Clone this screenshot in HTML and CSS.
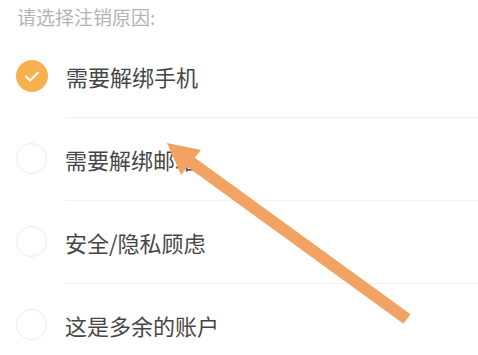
FILE: index.html
```html
<!DOCTYPE html>
<html lang="zh-CN">
<head>
    <meta charset="UTF-8">
    <meta name="viewport" content="width=device-width, initial-scale=1.0">
    <title>注销原因</title>
    <link rel="stylesheet" href="styles.css">
</head>
<body>
    <div class="page">
        <div class="title">请选择注销原因:</div>
        <div class="reason-list">
            <div class="reason">
                <span class="radio checked">
                    <svg viewBox="0 0 32 32" width="32" height="32">
                        <circle cx="16" cy="16" r="16" fill="#f7b14e"/>
                        <path d="M10 16.5 L14.2 20.5 L22 12.5" fill="none" stroke="#fff" stroke-width="1.8" stroke-linecap="round" stroke-linejoin="round"/>
                    </svg>
                </span>
                <span class="label">需要解绑手机</span>
            </div>
            <div class="reason">
                <span class="radio"></span>
                <span class="label">需要解绑邮箱</span>
            </div>
            <div class="reason">
                <span class="radio"></span>
                <span class="label">安全/隐私顾虑</span>
            </div>
            <div class="reason">
                <span class="radio"></span>
                <span class="label">这是多余的账户</span>
            </div>
        </div>

        <!-- 标注箭头 -->
        <svg class="arrow" viewBox="0 0 478 355" width="478" height="355">
            <line x1="407" y1="319" x2="188" y2="160" stroke="#f2a262" stroke-width="12"/>
            <polygon points="167,143 201,150 181,175" fill="#f2a262"/>
        </svg>
    </div>
</body>
</html>
```

FILE: styles.css
```css
body {
    margin: 0;
    background-color: #ffffff;
    font-family: "Noto Sans CJK SC", "Noto Sans", sans-serif;
}
.page {
    position: relative;
    width: 478px;
    height: 355px;
    overflow: hidden;
}
.title {
    height: 35px;
    line-height: 34px;
    padding-left: 17px;
    font-size: 19px;
    color: #b4b4b4;
}
.reason {
    display: flex;
    align-items: stretch;
    height: 83px;
    padding-left: 16px;
}
.radio {
    flex: none;
    align-self: center;
    width: 29px;
    height: 29px;
    border: 1.5px solid #ececec;
    border-radius: 50%;
    margin-top: -2px;
}
.radio.checked {
    width: 32px;
    height: 32px;
    border: none;
    display: flex;
}
.label {
    flex: 1;
    display: flex;
    align-items: center;
    margin-left: 18px;
    font-size: 22px;
    color: #464646;
    border-bottom: 1px solid #f2f2f2;
    padding-bottom: 1px;
}
.arrow {
    position: absolute;
    left: 0;
    top: 0;
}
```
